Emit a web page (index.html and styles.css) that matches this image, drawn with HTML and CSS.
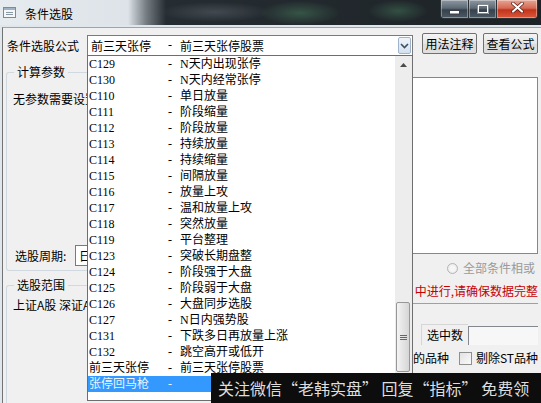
FILE: index.html
```html
<!DOCTYPE html>
<html lang="zh-CN">
<head>
    <meta charset="UTF-8">
    <title>条件选股</title>
    <link rel="stylesheet" href="styles.css">
</head>
<body>
<div class="window">
    <div class="titlebar">
        <svg class="app-icon" width="13" height="11" viewBox="0 0 13 11">
            <rect x="0.5" y="0.5" width="12" height="10" fill="#f4f6f8" stroke="#7d8b97"/>
            <rect x="1" y="1" width="11" height="2" fill="#9fb3c4"/>
            <path d="M3 5.5h7M3 7.5h7" stroke="#8a98a4"/>
        </svg>
        <span class="title">条件选股</span>
        <div class="win-buttons">
            <span class="wbtn wbtn-min">
                <svg width="11" height="5" viewBox="0 0 11 5"><rect x="0.5" y="0.5" width="10" height="3.5" fill="#fff" stroke="#3a4148"/></svg>
            </span>
            <span class="wbtn wbtn-max">
                <svg width="12" height="10" viewBox="0 0 12 10"><rect x="1" y="1" width="10" height="8" fill="none" stroke="#fff" stroke-width="2"/><rect x="0.5" y="0.5" width="11" height="9" fill="none" stroke="#3a4148" stroke-width="0.6"/></svg>
            </span>
            <span class="wbtn wbtn-close">
                <svg width="13" height="11" viewBox="0 0 13 11"><path d="M2 1.5l9 8M11 1.5l-9 8" stroke="#5a1a10" stroke-width="3.6" stroke-linecap="round"/><path d="M2 1.5l9 8M11 1.5l-9 8" stroke="#fff" stroke-width="2.2" stroke-linecap="round"/></svg>
            </span>
        </div>
    </div>

    <div class="frame">
        <div class="formula-row">
            <span class="label">条件选股公式</span>
            <div class="combo formula-combo">
                <span class="code">前三天张停</span><span class="dash">-</span><span class="name">前三天张停股票</span>
                <span class="combo-arrow">
                    <svg width="9" height="6" viewBox="0 0 9 6"><path d="M1 1l3.5 3.5L8 1" fill="none" stroke="#3c4e62" stroke-width="1.6"/></svg>
                </span>
            </div>
            <button class="btn btn-help">用法注释</button>
            <button class="btn btn-view">查看公式</button>
        </div>

        <div class="panels">
            <div class="left-col">
                <fieldset class="group group-params">
                    <legend>计算参数</legend>
                    <div class="group-body">
                        <p class="no-params">无参数需要设置</p>
                        <div class="period-row">
                            <span class="period-label">选股周期:</span>
                            <div class="combo period-combo">日线</div>
                        </div>
                    </div>
                </fieldset>
                <fieldset class="group group-range">
                    <legend>选股范围</legend>
                    <p class="range-text">上证A股 深证A股</p>
                </fieldset>
            </div>

            <div class="right-col">
                <div class="cond-box"></div>
                <div class="radio-row">
                    <span class="radio"></span>全部条件相或
                </div>
                <p class="warn">中进行,请确保数据完整</p>
                <div class="count-section">
                    <div class="count-row">
                        <span class="count-label">选中数</span>
                        <span class="count-input"></span>
                    </div>
                    <div class="st-row">
                        <span>的品种</span>
                        <span class="checkbox"></span>
                        <span>剔除ST品种</span>
                    </div>
                </div>
            </div>
        </div>
    </div>

    <!-- 公式下拉列表 -->
    <div class="dropdown">
        <div class="items">
            <div class="item"><span class="code">C129</span><span class="dash">-</span><span class="name">N天内出现张停</span></div>
            <div class="item"><span class="code">C130</span><span class="dash">-</span><span class="name">N天内经常张停</span></div>
            <div class="item"><span class="code">C110</span><span class="dash">-</span><span class="name">单日放量</span></div>
            <div class="item"><span class="code">C111</span><span class="dash">-</span><span class="name">阶段缩量</span></div>
            <div class="item"><span class="code">C112</span><span class="dash">-</span><span class="name">阶段放量</span></div>
            <div class="item"><span class="code">C113</span><span class="dash">-</span><span class="name">持续放量</span></div>
            <div class="item"><span class="code">C114</span><span class="dash">-</span><span class="name">持续缩量</span></div>
            <div class="item"><span class="code">C115</span><span class="dash">-</span><span class="name">间隔放量</span></div>
            <div class="item"><span class="code">C116</span><span class="dash">-</span><span class="name">放量上攻</span></div>
            <div class="item"><span class="code">C117</span><span class="dash">-</span><span class="name">温和放量上攻</span></div>
            <div class="item"><span class="code">C118</span><span class="dash">-</span><span class="name">突然放量</span></div>
            <div class="item"><span class="code">C119</span><span class="dash">-</span><span class="name">平台整理</span></div>
            <div class="item"><span class="code">C123</span><span class="dash">-</span><span class="name">突破长期盘整</span></div>
            <div class="item"><span class="code">C124</span><span class="dash">-</span><span class="name">阶段强于大盘</span></div>
            <div class="item"><span class="code">C125</span><span class="dash">-</span><span class="name">阶段弱于大盘</span></div>
            <div class="item"><span class="code">C126</span><span class="dash">-</span><span class="name">大盘同步选股</span></div>
            <div class="item"><span class="code">C127</span><span class="dash">-</span><span class="name">N日内强势股</span></div>
            <div class="item"><span class="code">C131</span><span class="dash">-</span><span class="name">下跌多日再放量上涨</span></div>
            <div class="item"><span class="code">C132</span><span class="dash">-</span><span class="name">跳空高开或低开</span></div>
            <div class="item"><span class="code">前三天张停</span><span class="dash">-</span><span class="name">前三天张停股票</span></div>
            <div class="item selected"><span class="code">张停回马枪</span><span class="dash">-</span><span class="name"></span></div>
        </div>
        <div class="scrollbar">
            <span class="scroll-up">
                <svg width="7" height="4" viewBox="0 0 7 4"><path d="M0 4L3.5 0L7 4z" fill="#4a4a4a"/></svg>
            </span>
            <span class="thumb"><span class="grip"></span></span>
        </div>
    </div>

    <div class="watermark">关注微信“老韩实盘” 回复“指标” 免费领</div>
</div>
</body>
</html>
```

FILE: styles.css
```css
body {
    margin: 0;
    background-color: #f0f0f0;
    font-family: "Noto Sans CJK SC", sans-serif;
    font-size: 12px;
    color: #000;
}

p {
    margin: 0;
}

.window {
    position: relative;
    width: 541px;
    height: 403px;
    overflow: hidden;
    background-color: #dfe6ec;
}

/* 标题栏 */
.titlebar {
    display: flex;
    align-items: flex-start;
    height: 25px;
    margin-bottom: 2px;
    background:
        radial-gradient(ellipse 40px 12px at 300px 13px, rgba(70, 120, 90, 0.55), transparent),
        radial-gradient(ellipse 30px 11px at 398px 11px, rgba(70, 120, 90, 0.5), transparent),
        radial-gradient(ellipse 55px 10px at 215px 12px, rgba(120, 130, 140, 0.35), transparent),
        linear-gradient(90deg, #e6ebef 0, #dde3e8 128px, #767e83 146px, #262d32 166px, #1c2226 541px);
}

.app-icon {
    margin: 7px 0 0 3px;
}

.title {
    margin: 6px 0 0 9px;
    line-height: 16px;
    font-size: 12px;
}

.win-buttons {
    display: flex;
    margin-left: auto;
    margin-right: 3px;
    border: 1px solid #2c3136;
    border-top: none;
    border-radius: 0 0 4px 4px;
    overflow: hidden;
}

.wbtn {
    display: flex;
    align-items: center;
    justify-content: center;
    height: 18px;
    box-shadow: inset 0 0 0 1px rgba(255, 255, 255, 0.35);
    background: linear-gradient(#8d98a2 0, #5d6a75 45%, #36424c 55%, #4b5a66 100%);
}

.wbtn-min {
    width: 27px;
    padding-top: 6px;
    box-sizing: border-box;
}

.wbtn-max {
    width: 27px;
    border-left: 1px solid #2c3136;
}

.wbtn-close {
    width: 41px;
    border-left: 1px solid #2c3136;
    background: linear-gradient(#e8a493 0, #d46a55 45%, #c2341c 55%, #d9583c 100%);
    align-items: flex-start;
    padding-top: 2px;
    box-sizing: border-box;
}

/* 主体 */
.frame {
    height: 376px;
    margin-left: 2px;
    border-left: 1px solid #737373;
    border-top: 1px solid #9da4aa;
    background-color: #f0f0f0;
}

.formula-row {
    display: flex;
    align-items: flex-start;
    padding: 5px 0 0 4px;
}

.label {
    width: 80px;
    margin-top: 2px;
    line-height: 21px;
}

.combo {
    box-sizing: border-box;
    height: 21px;
    border: 1px solid #7a7a7a;
    background-color: white;
}

.formula-combo {
    display: flex;
    align-items: center;
    width: 326px;
    margin-top: 2px;
    padding-left: 3px;
    white-space: nowrap;
}

.formula-combo .code {
    width: 77px;
}

.combo-arrow {
    display: flex;
    align-items: center;
    justify-content: center;
    width: 13px;
    height: 17px;
    margin-left: auto;
    margin-right: 1px;
    box-sizing: border-box;
    border: 1px solid #9fb4ca;
    border-radius: 2px;
    background: linear-gradient(#eef4fa, #d3e1ef);
}

.btn {
    width: 55px;
    height: 21px;
    padding: 0;
    border: 1px solid #707070;
    border-radius: 2px;
    background: linear-gradient(#f4f4f4, #e6e6e6 50%, #dcdcdc 51%, #e0e0e0);
    font-family: "Noto Sans CJK SC", sans-serif;
    font-size: 12px;
    color: #000;
}

.btn-help {
    margin-left: 9px;
}

.btn-view {
    margin-left: 6px;
}

.panels {
    display: flex;
    justify-content: space-between;
    padding: 0 3px;
}

/* 左侧分组框，右半部分被下拉列表盖住 */
.left-col {
    width: 81px;
}

.group {
    margin: 0;
    padding: 0 0 4px 6px;
    min-width: 0;
    box-sizing: border-box;
    border: 1px solid #d0d9df;
    border-right: none;
    border-radius: 3px 0 0 3px;
}

.group legend {
    margin-left: 1px;
    padding: 0 3px;
    line-height: 16px;
    white-space: nowrap;
}

.group-params {
    height: 207px;
    margin-top: 8px;
}

.group-body {
    display: flex;
    flex-direction: column;
    height: 186px;
}

.no-params,
.range-text,
.period-row {
    overflow: hidden;
    white-space: nowrap;
}

.no-params {
    margin-top: 11px;
    line-height: 16px;
}

.period-row {
    display: flex;
    align-items: center;
    margin-top: auto;
    padding-left: 2px;
}

.period-label {
    flex: none;
    width: 60px;
}

.period-combo {
    flex: none;
    width: 100px;
    padding-left: 3px;
    line-height: 19px;
}

.group-range {
    height: 140px;
    margin-top: 6px;
}

.range-text {
    margin-top: 4px;
    line-height: 16px;
}

/* 右侧 */
.right-col {
    width: 233px;
}

.cond-box {
    height: 177px;
    margin-top: 21px;
    box-sizing: border-box;
    border: 1px solid #828790;
    background-color: white;
}

.radio-row {
    display: flex;
    justify-content: flex-end;
    align-items: center;
    margin-top: 6px;
    padding-right: 3px;
    line-height: 16px;
    color: #9a9a9a;
}

.radio {
    width: 11px;
    height: 11px;
    margin-right: 5px;
    box-sizing: border-box;
    border: 1px solid #b4b4b4;
    border-radius: 50%;
    background: radial-gradient(circle at 50% 50%, #f6f6f6 40%, #e0e0e0);
}

.warn {
    margin-top: 7px;
    line-height: 16px;
    text-align: right;
    white-space: nowrap;
    color: #c40000;
}

.count-section {
    margin-top: 4px;
    border-top: 1px solid #a0a0a0;
}

.count-row {
    display: flex;
    justify-content: flex-end;
    margin-top: 20px;
}

.count-label {
    padding: 0 5px;
    line-height: 19px;
    border-top: 1px solid #d6d6d6;
    border-left: 1px solid #d6d6d6;
}

.count-input {
    width: 70px;
    height: 19px;
    margin-top: 2px;
    box-sizing: border-box;
    border-top: 1px solid #828790;
    border-left: 1px solid #828790;
    background-color: #f7f7f7;
}

.st-row {
    display: flex;
    justify-content: flex-end;
    align-items: center;
    margin-top: 5px;
    line-height: 16px;
    white-space: nowrap;
}

.checkbox {
    width: 13px;
    height: 13px;
    margin: 0 4px 0 10px;
    box-sizing: border-box;
    border: 1px solid #8f8f8f;
    background: linear-gradient(135deg, #e2e2e2, #fafafa);
}

/* 下拉列表 */
.dropdown {
    position: absolute;
    left: 87px;
    top: 55px;
    display: flex;
    width: 326px;
    height: 346px;
    box-sizing: border-box;
    border: 1px solid #6e6e6e;
    background-color: white;
}

.items {
    flex: 1;
}

.item {
    display: flex;
    height: 16px;
    padding-left: 1px;
    line-height: 16px;
    white-space: nowrap;
    font-family: "Liberation Serif", "Noto Sans CJK SC", serif;
    font-size: 12px;
}

.item .code {
    width: 79px;
}

.dash {
    width: 12px;
    font-family: "Liberation Serif", serif;
}

.item.selected {
    background-color: #3399ff;
    color: #eaf4ff;
}

.scrollbar {
    display: flex;
    flex-direction: column;
    width: 17px;
    background-color: #ededed;
}

.scroll-up {
    display: flex;
    align-items: center;
    justify-content: center;
    height: 17px;
}

.thumb {
    display: flex;
    align-items: center;
    justify-content: center;
    height: 70px;
    margin: 229px 2px 0 1px;
    box-sizing: border-box;
    border: 1px solid #979797;
    border-radius: 2px;
    background: linear-gradient(90deg, #f4f4f4, #e4e4e4 50%, #d6d6d6);
}

.grip {
    width: 7px;
    height: 5px;
    background: repeating-linear-gradient(#666 0, #666 1px, transparent 1px, transparent 2px);
}

/* 水印 */
.watermark {
    position: absolute;
    left: 211px;
    top: 373px;
    right: 0;
    bottom: 0;
    padding-left: 7px;
    background-color: #0d0d0d;
    color: #dedede;
    font-size: 16px;
    line-height: 30px;
    white-space: nowrap;
}
```
